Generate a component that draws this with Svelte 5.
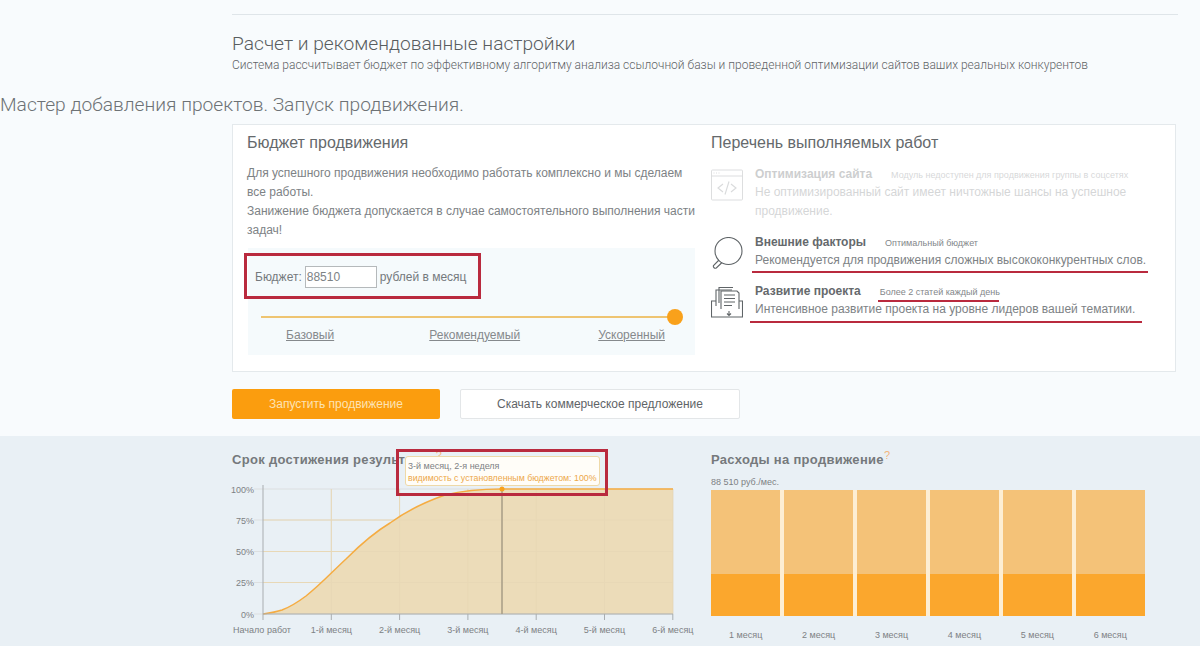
<script>
	const months = ['Начало работ', '1-й месяц', '2-й месяц', '3-й месяц', '4-й месяц', '5-й месяц', '6-й месяц'];
	const levels = [
		{ label: '100%', y: 9 },
		{ label: '75%', y: 40 },
		{ label: '50%', y: 71.5 },
		{ label: '25%', y: 102.5 },
		{ label: '0%', y: 134 }
	];
	const stepX = 68.3;
	const left = 43;
	const curve =
		'M43 134 C50 133 56 132 62 130 C70 127 78 122 86 116 C100 105 112 92 126 79 C140 65 155 52 170 43 C185 32 205 22 225 15 C245 10 265 9 282 9 L453 9';
	const costs = ['1 месяц', '2 месяц', '3 месяц', '4 месяц', '5 месяц', '6 месяц'];
</script>

<div class="page">
	<div class="top">
		<div class="rule"></div>
		<h2>Расчет и рекомендованные настройки</h2>
		<p class="lead">Система рассчитывает бюджет по эффективному алгоритму анализа ссылочной базы и проведенной оптимизации сайтов ваших реальных конкурентов</p>
	</div>

	<h1>Мастер добавления проектов. Запуск продвижения.</h1>

	<div class="wrap">
		<div class="card">
			<section class="budget">
				<h3>Бюджет продвижения</h3>
				<p class="text">Для успешного продвижения необходимо работать комплексно и мы сделаем все работы.<br />Занижение бюджета допускается в случае самостоятельного выполнения части задач!</p>
				<div class="slider-box">
					<div class="budget-row">
						<span>Бюджет:</span>
						<input value="88510" />
						<span>рублей в месяц</span>
						<div class="red-box"></div>
					</div>
					<div class="track"><span class="knob"></span></div>
					<div class="speeds">
						<a href="#base">Базовый</a>
						<a href="#rec">Рекомендуемый</a>
						<a href="#fast">Ускоренный</a>
					</div>
				</div>
			</section>

			<section class="works">
				<h3>Перечень выполняемых работ</h3>

				<div class="work disabled">
					<svg class="icon" viewBox="0 0 32 32" fill="none" stroke="#8b9094" stroke-width="0.9">
						<rect x="0.5" y="1" width="31" height="30" rx="1" />
						<path d="M0.5 7h31" />
						<path d="M2.5 4h1M5 4h1M7.5 4h1" />
						<path d="M12 15l-5 4 5 4M20 15l5 4-5 4M18 12.500l-4 13" stroke-width="1.100" />
					</svg>
					<div class="work-body">
						<div class="work-head"><b>Оптимизация сайта</b><small>Модуль недоступен для продвижения группы в соцсетях</small></div>
						<p>Не оптимизированный сайт имеет ничтожные шансы на успешное продвижение.</p>
					</div>
				</div>

				<div class="work">
					<svg class="icon" viewBox="0 0 32 32" fill="none" stroke="#5f6467" stroke-width="1.100">
						<circle cx="17.500" cy="14" r="13.500" />
						<path d="M8 23l-5.500 5.500a2 2 0 0 0 2.800 2.500l5.700-5.500" />
					</svg>
					<div class="work-body">
						<div class="work-head"><b>Внешние факторы</b><small>Оптимальный бюджет</small></div>
						<p>Рекомендуется для продвижения сложных высококонкурентных слов.</p>
						<i class="line line-factors"></i>
					</div>
				</div>

				<div class="work">
					<svg class="icon" viewBox="0 0 32 32" fill="none" stroke="#5f6467" stroke-width="1.100">
						<path d="M5 15H0.500v16h31V15H27" />
						<path d="M5 20V4h16M8 17V1.500h14" />
						<path d="M10 23V5h16l2 2v16" fill="#fff" />
						<path d="M13 9h11M13 12.500h11M13 16h11M13 19.500h8" />
						<path d="M18 25v4M16 27.500l2 2 2-2" />
					</svg>
					<div class="work-body">
						<div class="work-head"><b>Развитие проекта</b><small>Более 2 статей каждый день<i class="line line-small"></i></small></div>
						<p>Интенсивное развитие проекта на уровне лидеров вашей тематики.</p>
						<i class="line line-growth"></i>
					</div>
				</div>
			</section>
		</div>

		<div class="actions">
			<button class="primary">Запустить продвижение</button>
			<button class="secondary">Скачать коммерческое предложение</button>
		</div>
	</div>

	<div class="band">
		<div class="band-inner">
			<section class="timing">
				<h4>Срок достижения результата<sup>?</sup></h4>
				<svg class="chart" viewBox="0 0 480 160" width="480" height="160">
					{#each months as _, i}
						{#if i > 0}
							<path d="M{left + i * stepX} 9V134" stroke="#dfe3e4" stroke-width="1" />
						{/if}
					{/each}
					{#each levels as l}
						<path d="M{left - 9} {l.y}H453" stroke="#dcdfe0" stroke-width="1" />
						<text class="tick" x={left - 9} y={l.y + 3.500} text-anchor="end">{l.label}</text>
					{/each}
					<path d="{curve} L453 134 L43 134 Z" fill="#ecdcb9" />
					{#each months as _, i}
						{#if i > 0}
							<path d="M{left + i * stepX} 9V134" stroke="#e8d8b6" stroke-width="1" />
						{/if}
					{/each}
					{#each levels.slice(1, 4) as l}
						<path d="M43 {l.y}H453" stroke="#e8d8b6" stroke-width="1" />
					{/each}
					<path d={curve} fill="none" stroke="#f5ac42" stroke-width="1.500" />
					<path d="M43 5V134M43 134H453" stroke="#a9adb0" stroke-width="1" fill="none" />
					{#each months as m, i}
						<path d="M{left + i * stepX} 134v6" stroke="#a9adb0" stroke-width="1" />
						<text class="tick" x={i === 0 ? left - 1 : left + i * stepX} y="153" text-anchor="middle">{m}</text>
					{/each}
					<path d="M282 9V134" stroke="#a79d86" stroke-width="1.500" />
					<circle cx="282" cy="9" r="2.500" fill="#f9a11b" />
				</svg>
				<div class="tip">
					<div>3-й месяц, 2-я неделя</div>
					<div class="tip-value">видимость с установленным бюджетом: 100%</div>
				</div>
				<div class="red-tip"></div>
			</section>

			<section class="costs">
				<h4>Расходы на продвижение<sup>?</sup></h4>
				<div class="sum">88 510 руб./мес.</div>
				<div class="bars">
					{#each costs as c}
						<div class="bar"><span class="bar-top"></span><span class="bar-bottom"></span></div>
					{/each}
				</div>
				<div class="bar-labels">
					{#each costs as c}
						<span>{c}</span>
					{/each}
				</div>
			</section>
		</div>
	</div>
</div>

<style>
	:global(body) {
		margin: 0;
		background: #f8fbfd;
		overflow: hidden;
	}

	.page {
		width: 1200px;
		height: 646px;
		overflow: hidden;
		font-family: 'Liberation Sans', Arial, sans-serif;
		color: #6f7477;
	}

	.top {
		margin-left: 232px;
		width: 946px;
		padding-top: 14px;
	}

	.rule {
		height: 1px;
		background: #dfe5e9;
	}

	h2 {
		margin: 18px 0 0;
		font-family: Roboto, sans-serif;
		font-size: 19.200px;
		line-height: 22px;
		font-weight: 300;
		color: #585d60;
	}

	.lead {
		margin: 2px 0 0;
		font-family: Roboto, sans-serif;
		font-weight: 300;
		font-size: 12px;
		line-height: 16px;
		white-space: nowrap;
		color: #5f6467;
	}

	h1 {
		margin: 20px 0 0;
		font-family: Roboto, sans-serif;
		font-size: 19.200px;
		line-height: 24px;
		font-weight: 300;
		color: #6d7275;
		white-space: nowrap;
	}

	.wrap {
		margin: 7px 0 0 232px;
		width: 944px;
	}

	.card {
		display: flex;
		height: 248px;
		box-sizing: border-box;
		background: #fff;
		border: 1px solid #e4e9ec;
	}

	.budget {
		width: 464px;
		padding: 0 0 0 14px;
		box-sizing: border-box;
		flex: none;
	}

	h3 {
		margin: 9px 0 0;
		font-size: 16px;
		line-height: 18px;
		font-weight: 400;
		color: #65696c;
	}

	.text {
		margin: 12px 0 0;
		width: 450px;
		font-size: 12px;
		line-height: 19px;
		color: #7d8285;
	}

	.slider-box {
		margin: 8px 0 0 1px;
		width: 447px;
		height: 107px;
		background: #f5fafc;
		padding: 18px 0 0 7px;
		box-sizing: border-box;
	}

	.budget-row {
		position: relative;
		display: flex;
		align-items: center;
		gap: 3px;
		height: 22px;
		font-size: 12px;
		color: #74797c;
		white-space: nowrap;
	}

	input {
		width: 72px;
		height: 22px;
		box-sizing: border-box;
		padding: 0 1px;
		border: 1px solid #b5b9bb;
		background: #fff;
		font: inherit;
		color: #7d8285;
	}

	.red-box {
		position: absolute;
		left: -11px;
		top: -13px;
		width: 237px;
		height: 46px;
		border: 3px solid #b92a3e;
		box-sizing: border-box;
	}

	.track {
		position: relative;
		margin: 28px 0 0 6px;
		width: 414px;
		height: 2px;
		background: #eec471;
	}

	.knob {
		position: absolute;
		right: -8px;
		top: -7px;
		width: 16px;
		height: 16px;
		border-radius: 50%;
		background: #f9a11b;
	}

	.speeds {
		display: flex;
		justify-content: space-between;
		margin: 9px 0 0 31px;
		width: 379px;
		font-size: 12px;
		line-height: 16px;
	}

	.speeds a {
		color: #85898c;
	}

	.speeds a:nth-child(2) {
		margin-left: 17px;
	}

	.works {
		flex: 1;
		padding-left: 14px;
	}

	.work {
		display: flex;
		gap: 12px;
		margin-top: 12px;
		align-items: flex-start;
	}

	.work.disabled {
		opacity: 0.32;
	}

	.icon {
		width: 32px;
		height: 32px;
		flex: none;
		margin-top: 5px;
	}

	.work-body {
		position: relative;
		top: 1px;
		flex: 1;
		min-width: 0;
	}

	.work-head {
		display: flex;
		align-items: baseline;
		white-space: nowrap;
		height: 18px;
		line-height: 18px;
	}

	.work-head b {
		font-size: 12px;
		font-weight: 700;
		color: #65696c;
	}

	.work-head small {
		font-size: 9px;
		margin-left: 19px;
		color: #83878a;
		position: relative;
	}

	.work-body p {
		margin: 0;
		font-size: 12px;
		line-height: 19px;
		color: #7d8285;
		width: 400px;
	}

	.line {
		position: absolute;
		height: 2px;
		background: #b92a3e;
	}

	.line-factors {
		left: -3px;
		top: 38px;
		width: 396px;
	}

	.line-growth {
		left: -5px;
		top: 39px;
		width: 392px;
	}

	.line-small {
		left: -2px;
		top: 17px;
		width: 121px;
	}

	.actions {
		display: flex;
		gap: 20px;
		margin-top: 17px;
	}

	button {
		height: 30px;
		font: inherit;
		font-size: 12px;
		padding: 0;
		border-radius: 2px;
		cursor: pointer;
	}

	.primary {
		width: 208px;
		border: none;
		background: #fb9d0e;
		color: #fde3b4;
	}

	.secondary {
		width: 280px;
		background: #fff;
		border: 1px solid #e3e6e8;
		color: #5f6467;
	}

	.band {
		margin-top: 17px;
		height: 210px;
		background: #e9f0f5;
	}

	.band-inner {
		display: flex;
		margin-left: 232px;
	}

	.timing {
		position: relative;
		width: 479px;
		flex: none;
	}

	.timing sup {
		margin-left: 9px;
	}

	h4 {
		margin: 0;
		padding-top: 16px;
		font-size: 13px;
		line-height: 16px;
		font-weight: 700;
		letter-spacing: 0.3px;
		color: #75797c;
		white-space: nowrap;
	}

	.chart {
		display: block;
		margin: 12px 0 0 -12px;
		overflow: visible;
	}

	.tick {
		font-size: 9px;
		fill: #7d8184;
	}

	.tip {
		position: absolute;
		left: 173px;
		top: 20px;
		width: 195px;
		height: 30px;
		box-sizing: border-box;
		padding: 3px 2px;
		background: #fffdf8;
		border: 1px solid #eed9a8;
		border-radius: 3px;
		font-size: 9px;
		line-height: 12px;
		color: #7d8184;
		white-space: nowrap;
	}

	.tip-value {
		font-size: 8.800px;
		color: #eda84a;
	}

	.red-tip {
		position: absolute;
		left: 164px;
		top: 13px;
		width: 212px;
		height: 47px;
		box-sizing: border-box;
		border: 3px solid #b92a3e;
	}

	.costs {
		flex: 1;
	}

	sup {
		font-size: 11px;
		font-weight: 400;
		color: #f3b57c;
		line-height: 0;
	}

	.sum {
		margin-top: 9px;
		height: 13px;
		font-size: 9px;
		line-height: 11px;
		color: #7d8184;
	}

	.bars {
		display: grid;
		grid-template-columns: repeat(6, 1fr);
		gap: 3.500px;
		width: 434px;
		height: 126px;
		background: #fdeed3;
	}

	.bar {
		display: flex;
		flex-direction: column;
	}

	.bar-top {
		flex: 84;
		background: #f4c278;
	}

	.bar-bottom {
		flex: 42;
		background: #fba72d;
	}

	.bar-labels {
		display: grid;
		grid-template-columns: repeat(6, 1fr);
		gap: 3.500px;
		width: 434px;
		margin-top: 14px;
		font-size: 9px;
		line-height: 11px;
		text-align: center;
		color: #7d8184;
	}
</style>
